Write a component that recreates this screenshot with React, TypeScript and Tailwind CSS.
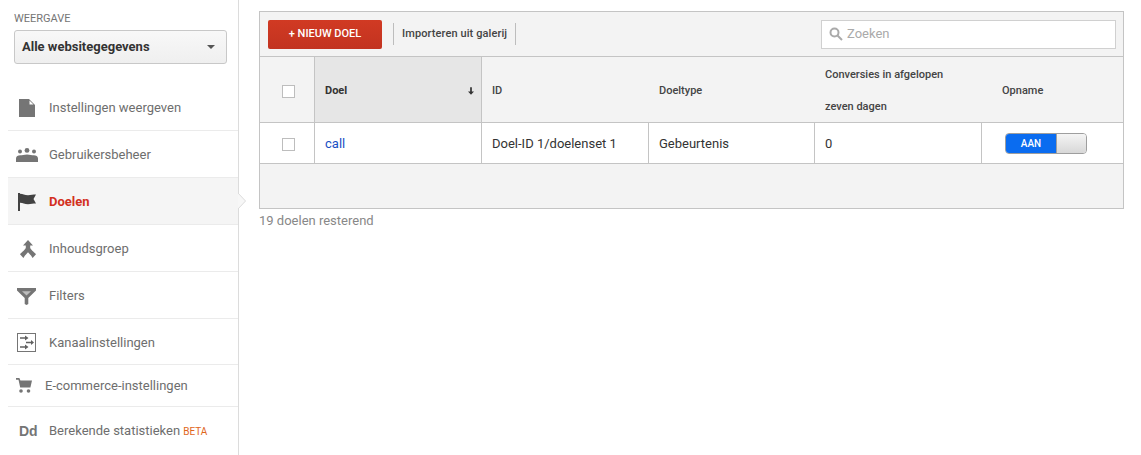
const FileIcon = () => (
  <svg viewBox="0 0 16 18" className="h-[18px] w-[16px] fill-[#757575]">
    <path d="M0 0h10l6 6v12H0z" />
    <path d="M10.500 1.500 14.500 5.500H10.500z" fill="#fff" />
  </svg>
);

const UsersIcon = () => (
  <svg viewBox="0 0 22 14" className="h-[14px] w-[22px] fill-[#757575]">
    <circle cx="4" cy="3.400" r="2" />
    <circle cx="11" cy="2.400" r="2.400" />
    <circle cx="18" cy="3.400" r="2" />
    <path d="M0 14v-3.500C0 8.300 2 7.200 4.200 7.200c1.800 0 4-.8 6.800-.8s5 .8 6.800.8c2.200 0 4.200 1.100 4.200 3.300V14z" />
  </svg>
);

const FlagIcon = () => (
  <svg viewBox="0 0 18 18" className="h-[18px] w-[18px] fill-[#424242]">
    <path d="M0 0h2v18H0z" />
    <path d="M2 .8c3 0 4.500 1.400 8 1.400 3 0 5-.7 8-.7l-2.500 4.500 2.500 4.500c-3 0-5 .7-8 .7-3.500 0-5-1.400-8-1.400z" />
  </svg>
);

const MergeIcon = () => (
  <svg viewBox="0 0 16 18" className="h-[18px] w-[16px] fill-[#757575]">
    <path d="M8 0l5 5.500H10.200v2.300c0 1.500 3.800 4 5.800 6.500L12.600 18C11.300 15.500 9.300 13.700 8 12.300 6.700 13.700 4.700 15.500 3.400 18L0 14.300c2-2.500 5.800-5 5.800-6.500V5.500H3z" />
  </svg>
);

const FilterIcon = () => (
  <svg viewBox="0 0 19 17" className="h-[17px] w-[19px] fill-[#757575]">
    <path d="M0 0h19v2.500L11.300 10v6L9.500 17 7.700 16v-6L0 2.500z" />
    <path d="M5 3.200h9L9.500 7.600z" fill="#bdbdbd" />
  </svg>
);

const ChannelIcon = () => (
  <svg viewBox="0 0 19 19" className="h-[19px] w-[19px]">
    <rect x="0.500" y="0.500" width="18" height="18" fill="#fff" stroke="#757575" />
    <path d="M3 5h6M3 14h6M9 9.500h6" stroke="#616161" strokeWidth="1.400" />
    <path d="M8 2.500l3.500 2.500L8 7.500zM8 11.500l3.500 2.500L8 16.500zM14 7l3 2.500-3 2.500z" fill="#616161" />
  </svg>
);

const CartIcon = () => (
  <svg viewBox="0 0 16 15" className="h-[15px] w-[16px] fill-[#757575]">
    <path d="M0 0h3.400l1 2.500H16l-1.600 7H4.200L2.500 1.700H0z" />
    <circle cx="5" cy="13" r="1.800" />
    <circle cx="12.500" cy="13" r="1.800" />
  </svg>
);

const navItems = [
  { label: "Instellingen weergeven", icon: <FileIcon />, h: "h-[46px]", iconBox: "w-[41px] pl-[11px]" },
  { label: "Gebruikersbeheer", icon: <UsersIcon />, h: "h-[47px] pt-[2px]", iconBox: "w-[41px] pl-[8px]" },
  { label: "Doelen", icon: <FlagIcon />, h: "h-[47px] pt-[2px]", iconBox: "w-[41px] pl-[10px]", active: true },
  { label: "Inhoudsgroep", icon: <MergeIcon />, h: "h-[47px] pt-[2px]", iconBox: "w-[41px] pl-[12px]" },
  { label: "Filters", icon: <FilterIcon />, h: "h-[47px] pt-[2px]", iconBox: "w-[41px] pl-[9px]" },
  { label: "Kanaalinstellingen", icon: <ChannelIcon />, h: "h-[46px] pt-[2px]", iconBox: "w-[41px] pl-[9px]" },
  { label: "E-commerce-instellingen", icon: <CartIcon />, h: "h-[42px]", iconBox: "w-[37px] pl-[8px]" },
];

const Check = () => (
  <span className="block h-[13px] w-[13px] border border-[#bdbdbd] bg-white" />
);

export default function App() {
  return (
    <div className="flex h-[455px] w-[1141px] overflow-hidden bg-white font-['Roboto',sans-serif]">
      <aside className="h-full w-[239px] shrink-0 border-r border-[#dcdcdc] pl-2">
        <div className="pl-[6px] pr-[11px] pt-[12px]">
          <div className="text-[11px] leading-[13px] text-[#757575]">WEERGAVE</div>
          <div className="mt-[5px] flex h-[34px] items-center justify-between rounded-[3px] border border-[#c8c8c8] bg-gradient-to-b from-[#f8f8f8] to-[#efefef] pl-[7px] pr-[11px] text-[13px] font-bold text-[#333]">
            Alle websitegegevens
            <span className="h-0 w-0 border-x-[4px] border-t-[4px] border-x-transparent border-t-[#555]" />
          </div>
        </div>
        <nav className="mt-[21px]">
          {navItems.map((item) => (
            <div
              key={item.label}
              className={`relative flex ${item.h} items-center border-b border-[#ebebeb] text-[13px] ${
                item.active ? "bg-[#f5f5f5] font-bold text-[#d3301f]" : "text-[#6e6e6e]"
              }`}
            >
              <span className={`flex shrink-0 items-center ${item.iconBox}`}>{item.icon}</span>
              {item.label}
              {item.active && (
                <svg viewBox="0 0 8 16" className="absolute right-[-8px] top-[15px] h-[16px] w-[8px]">
                  <path d="M0 0l8 8-8 8z" fill="#f7f7f7" />
                  <path d="M0 0l7.500 8L0 16" fill="none" stroke="#dcdcdc" />
                </svg>
              )}
            </div>
          ))}
          <div className="flex h-[48px] items-center text-[13px] text-[#6e6e6e]">
            <span className="w-[41px] shrink-0 pl-[11px] font-['Liberation_Sans',sans-serif] text-[14px] font-bold leading-none text-[#757575]">Dd</span>
            Berekende statistieken
            <span className="ml-[3px] pt-[1px] text-[10px] text-[#e0661b]">BETA</span>
          </div>
        </nav>
      </aside>

      <main className="box-content w-[865px] pl-[20px] pt-[11px]">
        <div className="w-[865px] border border-[#c4c4c4] bg-[#f3f3f3]">
          <div className="flex h-[45px] items-center border-b border-[#c4c4c4] pl-2 pr-[7px]">
            <button className="h-[29px] w-[114px] rounded-[2px] bg-[#c9321f] bg-gradient-to-b from-[#d13a23] to-[#c23320] text-[11px] font-medium text-white">
              + NIEUW DOEL
            </button>
            <span className="ml-[11px] h-[22px] w-px bg-[#bdbdbd]" />
            <span className="px-2 text-[11px] font-medium tracking-[0.1px] text-[#444]">Importeren uit galerij</span>
            <span className="h-[22px] w-px bg-[#bdbdbd]" />
            <div className="ml-auto flex h-[29px] w-[295px] items-center gap-[4px] border border-[#d0d0d0] bg-white pl-[7px] text-[13px] text-[#aaa]">
              <svg viewBox="0 0 14 14" className="h-[14px] w-[14px] fill-none stroke-[#aaa] stroke-2">
                <circle cx="5.500" cy="5.500" r="4" />
                <path d="M8.500 8.500 13 13" />
              </svg>
              Zoeken
            </div>
          </div>

          <div className="grid h-[66px] grid-cols-[54px_168px_166px_166px_167px_1fr] grid-rows-[65px] border-b border-[#c4c4c4] text-[11px] font-medium text-[#444]">
            <div className="flex items-center pl-[22px] pt-[3px]"><Check /></div>
            <div className="flex items-center justify-between border-x border-[#c4c4c4] bg-[#e6e6e6] pl-[10px] pr-[7px] pt-[3px] font-bold text-[#333]">
              Doel
              <svg viewBox="0 0 7 9" className="h-[8px] w-[6px] fill-[#333]">
                <path d="M2.500 0h2v5H7L3.500 9 0 5h2.500z" />
              </svg>
            </div>
            <div className="flex items-center pl-[10px] pt-[3px]">ID</div>
            <div className="flex items-center pl-[11px] pt-[3px]">Doeltype</div>
            <div className="flex items-center pl-[11px] pt-[2px] leading-[32px]">
              <span>Conversies in afgelopen<br />zeven dagen</span>
            </div>
            <div className="flex items-center pl-[21px] pt-[3px]">Opname</div>
          </div>

          <div className="grid h-[41px] grid-cols-[54px_167px_167px_166px_167px_1fr] border-b border-[#c4c4c4] bg-white text-[13px] text-[#333]">
            <div className="flex items-center pl-[22px] pt-[3px]"><Check /></div>
            <div className="flex items-center border-l border-[#c4c4c4] pl-[10px] pt-[2px] text-[#1a4fc4]">call</div>
            <div className="flex items-center border-l border-[#c4c4c4] pl-[10px] pt-[2px]">Doel-ID 1/doelenset 1</div>
            <div className="flex items-center border-l border-[#c4c4c4] pl-[10px] pt-[2px]">Gebeurtenis</div>
            <div className="flex items-center border-l border-[#c4c4c4] pl-[10px] pt-[2px]">0</div>
            <div className="flex items-center border-l border-[#c4c4c4] pl-[23px]">
              <div className="flex h-[21px] w-[82px] overflow-hidden rounded-[4px] border border-[#9e9e9e]">
                <span className="flex w-[50px] items-center justify-center bg-[#0a6cf0] text-[10px] font-medium text-white">AAN</span>
                <span className="flex-1 border-l border-[#9e9e9e] bg-gradient-to-b from-[#f4f4f4] to-[#d8d8d8]" />
              </div>
            </div>
          </div>

          <div className="h-[44px]" />
        </div>
        <p className="mt-[4px] text-[13px] leading-[15px] text-[#888]">19 doelen resterend</p>
      </main>
    </div>
  );
}
